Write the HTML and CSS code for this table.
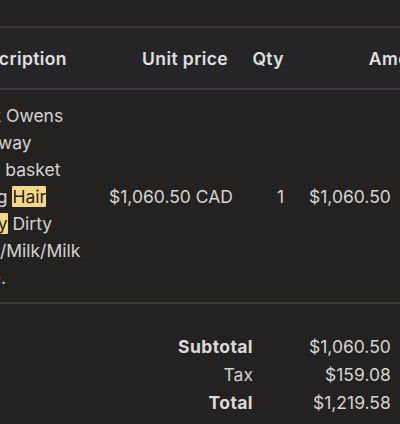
FILE: index.html
```html
<!DOCTYPE html>
<html lang="en">
<head>
<meta charset="utf-8">
<title>Invoice items</title>
<link rel="stylesheet" href="styles.css">
</head>
<body>
<div class="page">
  <div class="table">
    <div class="row head">
      <div class="cell desc">Description</div>
      <div class="cell num">Unit price</div>
      <div class="cell num">Qty</div>
      <div class="cell num">Amount</div>
    </div>
    <div class="row item">
      <div class="cell desc">Rick Owens<br>Runway<br>Low basket<br>Long <mark>Hair</mark><br><mark>Pony</mark> Dirty<br>Milk/Milk/Milk<br>Size.</div>
      <div class="cell num">$1,060.50 CAD</div>
      <div class="cell num">1</div>
      <div class="cell num">$1,060.50<span class="cur">CAD</span></div>
    </div>
  </div>
  <div class="totals">
    <div class="label strong">Subtotal</div>
    <div class="value">$1,060.50<span class="cur">CAD</span></div>
    <div class="label">Tax</div>
    <div class="value">$159.08<span class="cur">CAD</span></div>
    <div class="label strong">Total</div>
    <div class="value">$1,219.58<span class="cur">CAD</span></div>
  </div>
</div>
</body>
</html>
```

FILE: styles.css
```css
html, body {
  margin: 0;
  padding: 0;
  background: #242221;
  overflow: hidden;
}
body {
  font-family: Inter, "Noto Sans", sans-serif;
  font-size: 17.5px;
  color: #d4d4d4;
}
.page {
  margin-left: -46px;
  width: 496px;
  padding-top: 26px;
}
.row {
  display: grid;
  grid-template-columns: 143px 143px 56px 154px;
  align-items: center;
}
.cell {
  padding: 0 12px;
  white-space: nowrap;
}
.num {
  text-align: right;
}
.head {
  height: 60px;
  background: #252528;
  border-top: 2px solid #3a3b3e;
  border-bottom: 2px solid #3a3b3e;
  font-weight: 600;
  letter-spacing: 0.4px;
  color: #e0e0e0;
}
.head .desc {
  padding-left: 11px;
}
.item {
  padding: 11.5px 0;
  border-bottom: 2px solid #3a3b3e;
  line-height: 27px;
}
mark {
  background: #f7d889;
  color: #1f1d1a;
  border-radius: 1px;
}
.cur {
  margin-left: 10px;
}
.totals {
  display: grid;
  grid-template-columns: 1fr 185px;
  padding: 29px 12px 0 0;
  line-height: 28px;
}
.label {
  text-align: right;
  color: #cfcfcf;
}
.label.strong {
  font-weight: 700;
  letter-spacing: 0.4px;
  color: #dadada;
}
.value {
  text-align: right;
  white-space: nowrap;
  color: #d4d4d4;
}
```
